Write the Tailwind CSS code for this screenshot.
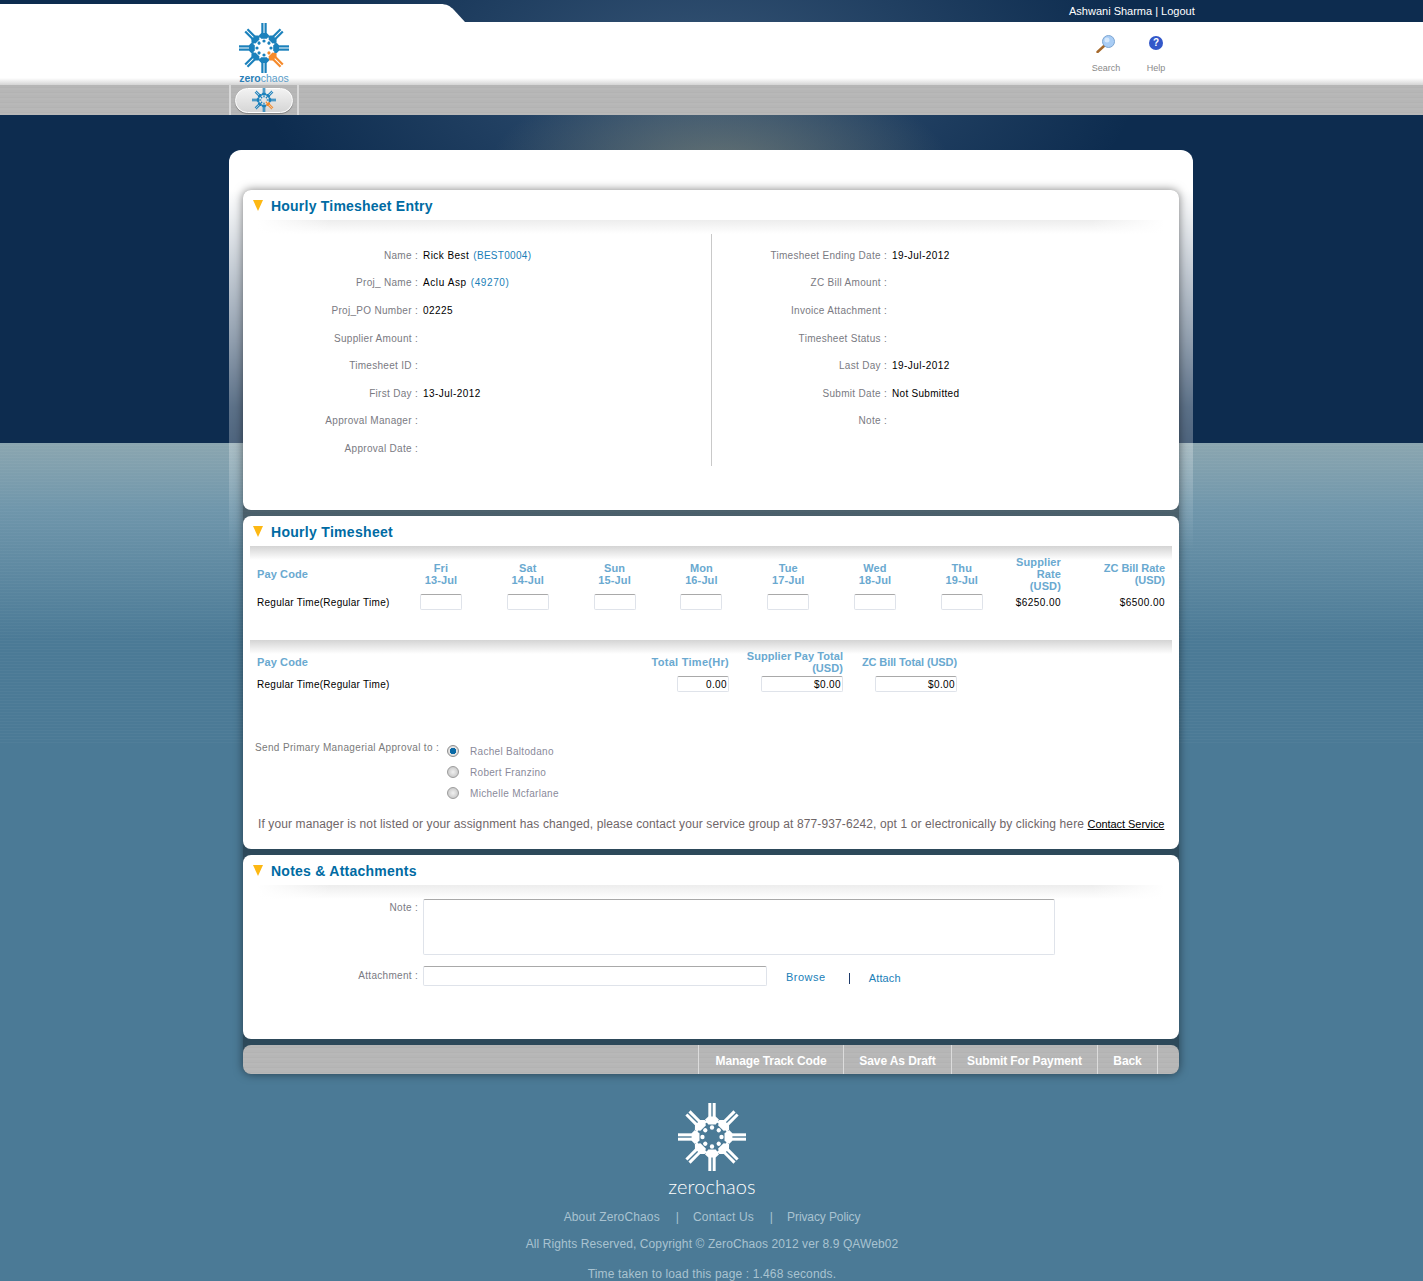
<!DOCTYPE html>
<html>
<head>
<meta charset="utf-8">
<title>Hourly Timesheet Entry</title>
<script src="https://cdn.jsdelivr.net/npm/@tailwindcss/browser@4"></script>
</head>
<body>
<div class="relative isolate h-[1281px] w-[1423px] overflow-hidden font-['Liberation_Sans',Arial,sans-serif] bg-[radial-gradient(ellipse_230px_90px_at_720px_165px,rgba(150,150,125,.55),transparent),radial-gradient(ellipse_440px_230px_at_700px_70px,rgba(110,140,170,.42),transparent),linear-gradient(to_bottom,#0d2c4f_0,#0d2c4f_443px,#8ba6b0_443px,#6f96ab_510px,#4b7a96_640px,#4b7a96_100%)]">

  <!-- brushed lines on the water band -->
  <div class="absolute left-0 top-[443px] -z-10 h-[300px] w-full bg-[repeating-linear-gradient(to_bottom,transparent_0,transparent_2px,rgba(255,255,255,.03)_2px,rgba(255,255,255,.03)_3px)]"></div>

  <svg width="0" height="0" class="absolute">
    <defs>
      <g id="fig">
        <rect x="-2.7" y="-25" width="2.2" height="11" fill="currentColor"/>
        <rect x="0.5" y="-25" width="2.2" height="11" fill="currentColor"/>
        <path d="M-2.7 -15H2.7L5.2 -12.6L2.8 -9.2H-2.8L-5.2 -12.6Z" fill="currentColor"/>
        <circle cx="0" cy="-7" r="1.6" fill="currentColor"/>
      </g>
      <g id="mark">
        <circle r="12" fill="none" stroke="currentColor" stroke-width="1.4"/>
        <use href="#fig"/>
        <use href="#fig" transform="rotate(45)"/>
        <use href="#fig" transform="rotate(90)"/>
        <use href="#fig" transform="rotate(180)"/>
        <use href="#fig" transform="rotate(225)"/>
        <use href="#fig" transform="rotate(270)"/>
        <use href="#fig" transform="rotate(315)"/>
      </g>
    </defs>
  </svg>

  <!-- header -->
  <header>
    <div class="relative h-[22px]">
      <svg class="absolute left-0 top-[4px]" width="466" height="18" viewBox="0 0 466 18"><path d="M0 0H440C447 0 450 2 454 6L465 18H0Z" fill="#fff"/></svg>
      <div class="absolute left-[1069px] top-[5px] text-[11px] leading-[13px] text-white">Ashwani Sharma | Logout</div>
    </div>
    <div class="h-[63px] bg-[linear-gradient(to_bottom,#fff_0,#fff_56px,#d4d4d4_100%)] flex">
      <div class="ml-[239px] w-[52px] pt-[1px] text-center">
        <svg width="50" height="50" viewBox="-25 -25 50 50" class="text-[#1b81bc]">
          <use href="#mark"/>
          <use href="#fig" transform="rotate(135)" class="text-[#f58a2b]"/>
        </svg>
        <div class="w-[50px] text-[10.5px] leading-[10px] text-[#2a80b8] whitespace-nowrap"><span class="font-bold">zero</span><span class="text-[#5a9cc8]">chaos</span></div>
      </div>
      <div class="ml-[790px] w-[50px] pt-[13px] flex flex-col items-center">
        <svg width="20" height="18" viewBox="0 0 20 18">
          <path d="M8 11L1.5 17" stroke="#a5682a" stroke-width="2.4" stroke-linecap="round"/>
          <circle cx="12.5" cy="6.5" r="6" fill="#a9cdf5" stroke="#7da6d2" stroke-width="1"/>
          <circle cx="11" cy="5" r="2.5" fill="#d6e8fb"/>
        </svg>
        <div class="mt-[10px] text-[9px] leading-[11px] text-[#8a8a8a]">Search</div>
      </div>
      <div class="w-[50px] pt-[13px] flex flex-col items-center">
        <div class="h-[18px] flex items-start">
          <div class="w-[14px] h-[14px] mt-[1px] rounded-full bg-[#3257c9] text-white text-[10px] leading-[14px] font-bold text-center">?</div>
        </div>
        <div class="mt-[10px] text-[9px] leading-[11px] text-[#8a8a8a]">Help</div>
      </div>
    </div>
    <div class="h-[30px] bg-[repeating-linear-gradient(to_bottom,#b6b6b6_0,#b6b6b6_2px,#b3b3b3_2px,#b3b3b3_3px,#b8b8b8_3px,#b8b8b8_5px)] flex">
      <div class="ml-[229px] w-[70px] h-full border-x-2 border-[#d8d8d8] flex items-center justify-center">
        <div class="w-[58px] h-[25px] rounded-full border border-white bg-[linear-gradient(to_bottom,#f2f2f2,#d6d6d6)] shadow-[0_1px_1px_rgba(0,0,0,.3)] flex items-center justify-center">
          <svg width="24" height="24" viewBox="-25 -25 50 50" class="text-[#1b81bc]">
            <use href="#mark"/>
            <use href="#fig" transform="rotate(135)" class="text-[#f58a2b]"/>
          </svg>
        </div>
      </div>
    </div>
  </header>

  <!-- main -->
  <main class="ml-[229px] mt-[35px] w-[964px] px-[14px] pt-[40px] rounded-t-xl bg-[linear-gradient(to_bottom,#fff_0,#fff_40px,rgba(255,255,255,.95)_57px,rgba(255,255,255,.75)_123px,rgba(255,255,255,.55)_190px,rgba(255,255,255,.33)_257px,rgba(255,255,255,.27)_293px,rgba(255,255,255,0)_400px)]">
    <div class="flex flex-col gap-[6px] rounded-lg bg-black/40 shadow-[0_0_10px_rgba(0,0,0,.5)]">

      <!-- entry details -->
      <section class="h-[320px] rounded-lg bg-white">
        <div class="h-[30px] pl-[10px] flex items-center">
          <svg width="10" height="11" viewBox="0 0 10 11"><path d="M0 0H10L5 11Z" fill="#fdb813"/></svg>
          <h2 class="ml-[8px] mt-[2px] text-[14px] font-bold tracking-[.22px] text-[#006ba3]">Hourly Timesheet Entry</h2>
        </div>
        <div class="mx-[15px] h-[14px] bg-[linear-gradient(to_right,#fff,transparent_8%,transparent_92%,#fff),linear-gradient(to_bottom,#ededed,#fff)]"></div>
        <div class="flex text-[10px] tracking-[.3px]">
          <div class="w-[469px] h-[232px] pt-[7.5px] border-r border-[#c9c9c9]">
            <div class="h-[27.6px] flex items-center"><span class="w-[175px] text-right text-[#7a7a82]">Name :</span><span class="ml-[5px] tracking-[.45px] text-black">Rick Best</span><span class="ml-[4px] text-[#1a80b8]">(BEST0004)</span></div>
            <div class="h-[27.6px] flex items-center"><span class="w-[175px] text-right text-[#7a7a82]">Proj_ Name :</span><span class="ml-[5px] tracking-[.6px] text-black">Aclu Asp</span><span class="ml-[4px] tracking-[.6px] text-[#1a80b8]">(49270)</span></div>
            <div class="h-[27.6px] flex items-center"><span class="w-[175px] text-right text-[#7a7a82]">Proj_PO Number :</span><span class="ml-[5px] tracking-[.45px] text-black">02225</span></div>
            <div class="h-[27.6px] flex items-center"><span class="w-[175px] text-right text-[#7a7a82]">Supplier Amount :</span></div>
            <div class="h-[27.6px] flex items-center"><span class="w-[175px] text-right text-[#7a7a82]">Timesheet ID :</span></div>
            <div class="h-[27.6px] flex items-center"><span class="w-[175px] text-right text-[#7a7a82]">First Day :</span><span class="ml-[5px] tracking-[.45px] text-black">13-Jul-2012</span></div>
            <div class="h-[27.6px] flex items-center"><span class="w-[175px] text-right text-[#7a7a82]">Approval Manager :</span></div>
            <div class="h-[27.6px] flex items-center"><span class="w-[175px] text-right text-[#7a7a82]">Approval Date :</span></div>
          </div>
          <div class="pt-[7.5px]">
            <div class="h-[27.6px] flex items-center"><span class="w-[175px] text-right text-[#7a7a82]">Timesheet Ending Date :</span><span class="ml-[5px] tracking-[.45px] text-black">19-Jul-2012</span></div>
            <div class="h-[27.6px] flex items-center"><span class="w-[175px] text-right text-[#7a7a82]">ZC Bill Amount :</span></div>
            <div class="h-[27.6px] flex items-center"><span class="w-[175px] text-right text-[#7a7a82]">Invoice Attachment :</span></div>
            <div class="h-[27.6px] flex items-center"><span class="w-[175px] text-right text-[#7a7a82]">Timesheet Status :</span></div>
            <div class="h-[27.6px] flex items-center"><span class="w-[175px] text-right text-[#7a7a82]">Last Day :</span><span class="ml-[5px] tracking-[.45px] text-black">19-Jul-2012</span></div>
            <div class="h-[27.6px] flex items-center"><span class="w-[175px] text-right text-[#7a7a82]">Submit Date :</span><span class="ml-[5px] tracking-[.3px] text-black">Not Submitted</span></div>
            <div class="h-[27.6px] flex items-center"><span class="w-[175px] text-right text-[#7a7a82]">Note :</span></div>
          </div>
        </div>
      </section>

      <!-- timesheet -->
      <section class="h-[333px] rounded-lg bg-white">
        <div class="h-[30px] pl-[10px] flex items-center">
          <svg width="10" height="11" viewBox="0 0 10 11"><path d="M0 0H10L5 11Z" fill="#fdb813"/></svg>
          <h2 class="ml-[8px] mt-[2px] text-[14px] font-bold tracking-[.3px] text-[#006ba3]">Hourly Timesheet</h2>
        </div>
        <div class="mx-[7px] h-[94px] px-[7px] pt-[10px] bg-[linear-gradient(to_bottom,#d4d4d4,#fff_14px)]">
          <div class="grid grid-cols-[140.6px_repeat(7,86.8px)_55.8px_104px] items-center text-[11px] leading-[12px] tracking-[.12px]">
            <div class="font-bold text-[#6aa9d0]">Pay Code</div>
            <div class="font-bold text-[#6aa9d0] text-center">Fri<br>13-Jul</div>
            <div class="font-bold text-[#6aa9d0] text-center">Sat<br>14-Jul</div>
            <div class="font-bold text-[#6aa9d0] text-center">Sun<br>15-Jul</div>
            <div class="font-bold text-[#6aa9d0] text-center">Mon<br>16-Jul</div>
            <div class="font-bold text-[#6aa9d0] text-center">Tue<br>17-Jul</div>
            <div class="font-bold text-[#6aa9d0] text-center">Wed<br>18-Jul</div>
            <div class="font-bold text-[#6aa9d0] text-center">Thu<br>19-Jul</div>
            <div class="font-bold text-[#6aa9d0] text-right">Supplier<br>Rate<br>(USD)</div>
            <div class="font-bold text-[#6aa9d0] text-right tracking-[-.05px] whitespace-nowrap">ZC Bill Rate<br>(USD)</div>
            <div class="mt-[4px] text-[10px] tracking-[.27px] text-black whitespace-nowrap">Regular Time(Regular Time)</div>
            <div class="mt-[2px] flex justify-center"><input class="w-[42px] h-[16px] rounded-[2px] border border-[#dfe3ea] border-t-[#a9a9a9]"></div>
            <div class="mt-[2px] flex justify-center"><input class="w-[42px] h-[16px] rounded-[2px] border border-[#dfe3ea] border-t-[#a9a9a9]"></div>
            <div class="mt-[2px] flex justify-center"><input class="w-[42px] h-[16px] rounded-[2px] border border-[#dfe3ea] border-t-[#a9a9a9]"></div>
            <div class="mt-[2px] flex justify-center"><input class="w-[42px] h-[16px] rounded-[2px] border border-[#dfe3ea] border-t-[#a9a9a9]"></div>
            <div class="mt-[2px] flex justify-center"><input class="w-[42px] h-[16px] rounded-[2px] border border-[#dfe3ea] border-t-[#a9a9a9]"></div>
            <div class="mt-[2px] flex justify-center"><input class="w-[42px] h-[16px] rounded-[2px] border border-[#dfe3ea] border-t-[#a9a9a9]"></div>
            <div class="mt-[2px] flex justify-center"><input class="w-[42px] h-[16px] rounded-[2px] border border-[#dfe3ea] border-t-[#a9a9a9]"></div>
            <div class="mt-[4px] text-[10px] tracking-[.45px] text-black text-right justify-self-end">$6250.00</div>
            <div class="mt-[4px] text-[10px] tracking-[.45px] text-black text-right">$6500.00</div>
          </div>
        </div>
        <div class="mx-[7px] h-[100px] px-[7px] pt-[10px] bg-[linear-gradient(to_bottom,#d4d4d4,#fff_14px)]">
          <div class="grid grid-cols-[358px_82px_82px_82px] gap-x-[32px] items-center text-[11px] leading-[12px] tracking-[.12px]">
            <div class="font-bold text-[#6aa9d0]">Pay Code</div>
            <div class="font-bold text-[#6aa9d0] text-right tracking-[.28px] justify-self-end whitespace-nowrap">Total Time(Hr)</div>
            <div class="font-bold text-[#6aa9d0] text-right tracking-[.06px] justify-self-end whitespace-nowrap">Supplier Pay Total<br>(USD)</div>
            <div class="font-bold text-[#6aa9d0] text-right tracking-[-.1px] justify-self-end whitespace-nowrap">ZC Bill Total (USD)</div>
            <div class="mt-[4px] text-[10px] tracking-[.27px] text-black whitespace-nowrap">Regular Time(Regular Time)</div>
            <div class="mt-[2px] flex justify-end"><input value="0.00" class="w-[52px] h-[16px] px-[1px] text-right text-[10px] tracking-[.4px] text-black rounded-[2px] border border-[#dfe3ea] border-t-[#a9a9a9]"></div>
            <div class="mt-[2px] flex justify-end"><input value="$0.00" class="w-[82px] h-[16px] px-[1px] text-right text-[10px] tracking-[.4px] text-black rounded-[2px] border border-[#dfe3ea] border-t-[#a9a9a9]"></div>
            <div class="mt-[2px] flex justify-end"><input value="$0.00" class="w-[82px] h-[16px] px-[1px] text-right text-[10px] tracking-[.4px] text-black rounded-[2px] border border-[#dfe3ea] border-t-[#a9a9a9]"></div>
          </div>
        </div>
        <div class="ml-[12px] flex text-[10px] tracking-[.35px]">
          <div class="w-[184px] pt-[1px] text-[#7a7a7a] leading-[13px] whitespace-nowrap">Send Primary Managerial Approval to :</div>
          <div class="ml-[8px]">
            <div class="h-[21px] flex items-center"><input type="radio" checked class="appearance-none w-[12px] h-[12px] rounded-full border border-[#8f8f8f] bg-[radial-gradient(circle,#0a6aa6_0,#0a6aa6_3px,#e6e6e6_3.5px,#c4c4c4_100%)]"><span class="ml-[11px] mt-[1px] tracking-[.3px] text-[#8a8a9a]">Rachel Baltodano</span></div>
            <div class="h-[21px] flex items-center"><input type="radio" class="appearance-none w-[12px] h-[12px] rounded-full border border-[#9c9c9c] bg-[radial-gradient(circle,#f0f0f0,#bdbdbd)]"><span class="ml-[11px] mt-[1px] tracking-[.3px] text-[#8a8a9a]">Robert Franzino</span></div>
            <div class="h-[21px] flex items-center"><input type="radio" class="appearance-none w-[12px] h-[12px] rounded-full border border-[#9c9c9c] bg-[radial-gradient(circle,#f0f0f0,#bdbdbd)]"><span class="ml-[11px] mt-[1px] tracking-[.3px] text-[#8a8a9a]">Michelle Mcfarlane</span></div>
          </div>
        </div>
        <p class="ml-[15px] mt-[14px] text-[12px] leading-[14px] tracking-[.115px] text-[#6f6668] whitespace-nowrap">If your manager is not listed or your assignment has changed, please contact your service group at 877-937-6242, opt 1 or electronically by clicking here <a class="text-[11px] tracking-[-.05px] text-black underline">Contact Service</a></p>
      </section>

      <!-- notes -->
      <section class="h-[184px] rounded-lg bg-white">
        <div class="h-[30px] pl-[10px] flex items-center">
          <svg width="10" height="11" viewBox="0 0 10 11"><path d="M0 0H10L5 11Z" fill="#fdb813"/></svg>
          <h2 class="ml-[8px] mt-[2px] text-[14px] font-bold tracking-[.25px] text-[#006ba3]">Notes &amp; Attachments</h2>
        </div>
        <div class="mx-[15px] h-[14px] bg-[linear-gradient(to_right,#fff,transparent_8%,transparent_92%,#fff),linear-gradient(to_bottom,#ededed,#fff)]"></div>
        <div class="flex text-[10px] tracking-[.3px]">
          <span class="w-[175px] pt-[1px] text-right text-[#7a7a82]">Note :</span>
          <textarea class="ml-[5px] w-[632px] h-[56px] rounded-[2px] border border-[#dfe3ea] border-t-[#a9a9a9] resize-none"></textarea>
        </div>
        <div class="mt-[11px] flex items-center text-[10px] tracking-[.3px]">
          <span class="w-[175px] -mt-[2px] text-right text-[#7a7a82]">Attachment :</span>
          <input class="ml-[5px] w-[344px] h-[20px] rounded-[2px] border border-[#dfe3ea] border-t-[#a9a9a9]">
          <a class="ml-[19px] mt-[2px] text-[11px] tracking-[.5px] text-[#1a80b8]">Browse</a>
          <span class="ml-[23px] mt-[4px] w-[1px] h-[11px] bg-[#1d3a6a]"></span>
          <a class="ml-[19px] mt-[4px] text-[11px] tracking-[.15px] text-[#1a80b8]">Attach</a>
        </div>
      </section>

      <!-- actions -->
      <nav class="h-[29px] rounded-lg pr-[21px] flex justify-end bg-[repeating-linear-gradient(to_bottom,#b6b6b6_0,#b6b6b6_2px,#b3b3b3_2px,#b3b3b3_3px,#b8b8b8_3px,#b8b8b8_5px)] text-[12px] font-bold tracking-[-.1px] text-white">
        <a class="w-[145px] pt-[2px] h-full flex items-center justify-center border-l border-[#dcdcdc]">Manage Track Code</a>
        <a class="w-[108px] pt-[2px] h-full flex items-center justify-center border-l border-[#dcdcdc]">Save As Draft</a>
        <a class="w-[146px] pt-[2px] h-full flex items-center justify-center border-l border-[#dcdcdc]">Submit For Payment</a>
        <a class="w-[61px] pt-[2px] h-full flex items-center justify-center border-x border-[#dcdcdc]">Back</a>
      </nav>
    </div>
  </main>

  <!-- footer -->
  <footer class="mt-[29px] ml-[1px] text-center text-[12px] tracking-[.1px] text-[#a9c3d1]">
    <svg width="68" height="68" viewBox="-25 -25 50 50" class="mx-auto text-white">
      <use href="#mark"/>
      <use href="#fig" transform="rotate(135)"/>
    </svg>
    <div class="mt-[3px] font-['Lato',sans-serif] font-light text-[20px] leading-[24px] text-white">zerochaos</div>
    <div class="mt-[12px] leading-[14px] flex justify-center">
      <a class="tracking-[.14px]">About ZeroChaos</a><span class="ml-[16px] mr-[14px]">|</span><a class="tracking-[.15px]">Contact Us</a><span class="ml-[16px] mr-[14px]">|</span><a class="tracking-[-.1px]">Privacy Policy</a>
    </div>
    <div class="mt-[13px] leading-[14px]">All Rights Reserved, Copyright © ZeroChaos 2012 ver 8.9 QAWeb02</div>
    <div class="mt-[16px] leading-[14px] tracking-[.15px]">Time taken to load this page : 1.468 seconds.</div>
  </footer>
</div>
</body>
</html>
